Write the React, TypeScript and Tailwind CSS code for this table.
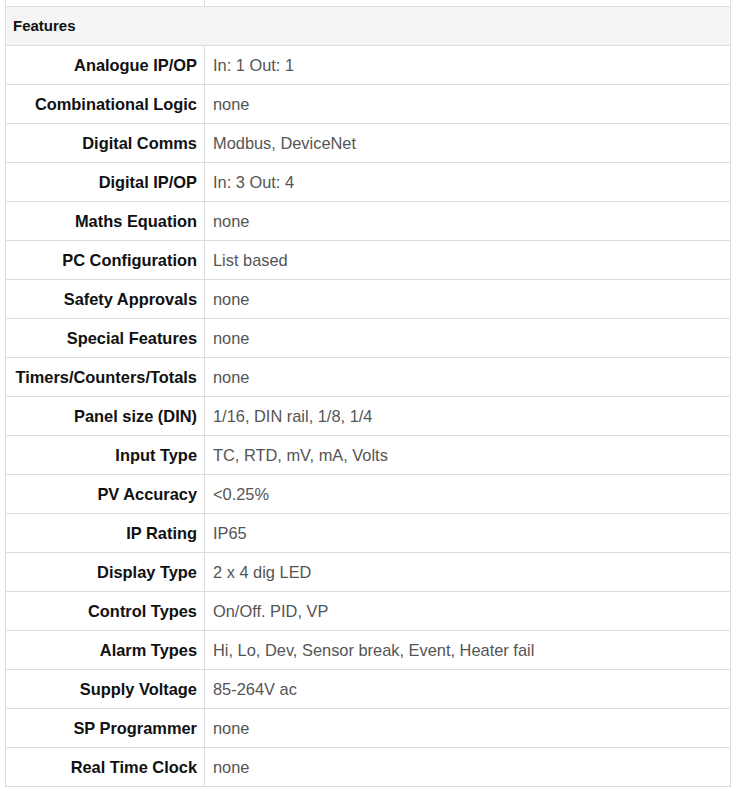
import React from 'react';

const rows: [string, string][] = [
  ['Analogue IP/OP', 'In: 1 Out: 1'],
  ['Combinational Logic', 'none'],
  ['Digital Comms', 'Modbus, DeviceNet'],
  ['Digital IP/OP', 'In: 3 Out: 4'],
  ['Maths Equation', 'none'],
  ['PC Configuration', 'List based'],
  ['Safety Approvals', 'none'],
  ['Special Features', 'none'],
  ['Timers/Counters/Totals', 'none'],
  ['Panel size (DIN)', '1/16, DIN rail, 1/8, 1/4'],
  ['Input Type', 'TC, RTD, mV, mA, Volts'],
  ['PV Accuracy', '<0.25%'],
  ['IP Rating', 'IP65'],
  ['Display Type', '2 x 4 dig LED'],
  ['Control Types', 'On/Off. PID, VP'],
  ['Alarm Types', 'Hi, Lo, Dev, Sensor break, Event, Heater fail'],
  ['Supply Voltage', '85-264V ac'],
  ['SP Programmer', 'none'],
  ['Real Time Clock', 'none'],
];

export default function App() {
  return (
    <div className="min-h-[792px] bg-white pl-[5px] font-['Liberation_Sans',Arial,sans-serif]">
      <div className="w-[726px] border-x border-[#dddddd]">
        {/* cut-off row from above */}
        <div className="grid grid-cols-[199px_1fr] border-b border-[#dddddd]">
          <div className="h-[6px] border-r border-[#dddddd]" />
          <div className="h-[6px]" />
        </div>

        <div className="flex h-[39px] items-center border-b border-[#dddddd] bg-[#f5f5f5] px-[7px] pt-[1px] text-[15px] font-bold text-[#111]">
          Features
        </div>

        {rows.map(([label, value]) => (
          <div key={label} className="grid grid-cols-[199px_1fr] border-b border-[#dddddd]">
            <div className="flex h-[38px] items-center justify-end border-r border-[#dddddd] pr-[7px] pt-[1px] text-[16.4px] font-bold text-[#111]">
              {label}
            </div>
            <div className="flex h-[38px] items-center pl-[8px] pt-[1px] text-[16.4px] text-[#555]">
              {value}
            </div>
          </div>
        ))}
      </div>
    </div>
  );
}
